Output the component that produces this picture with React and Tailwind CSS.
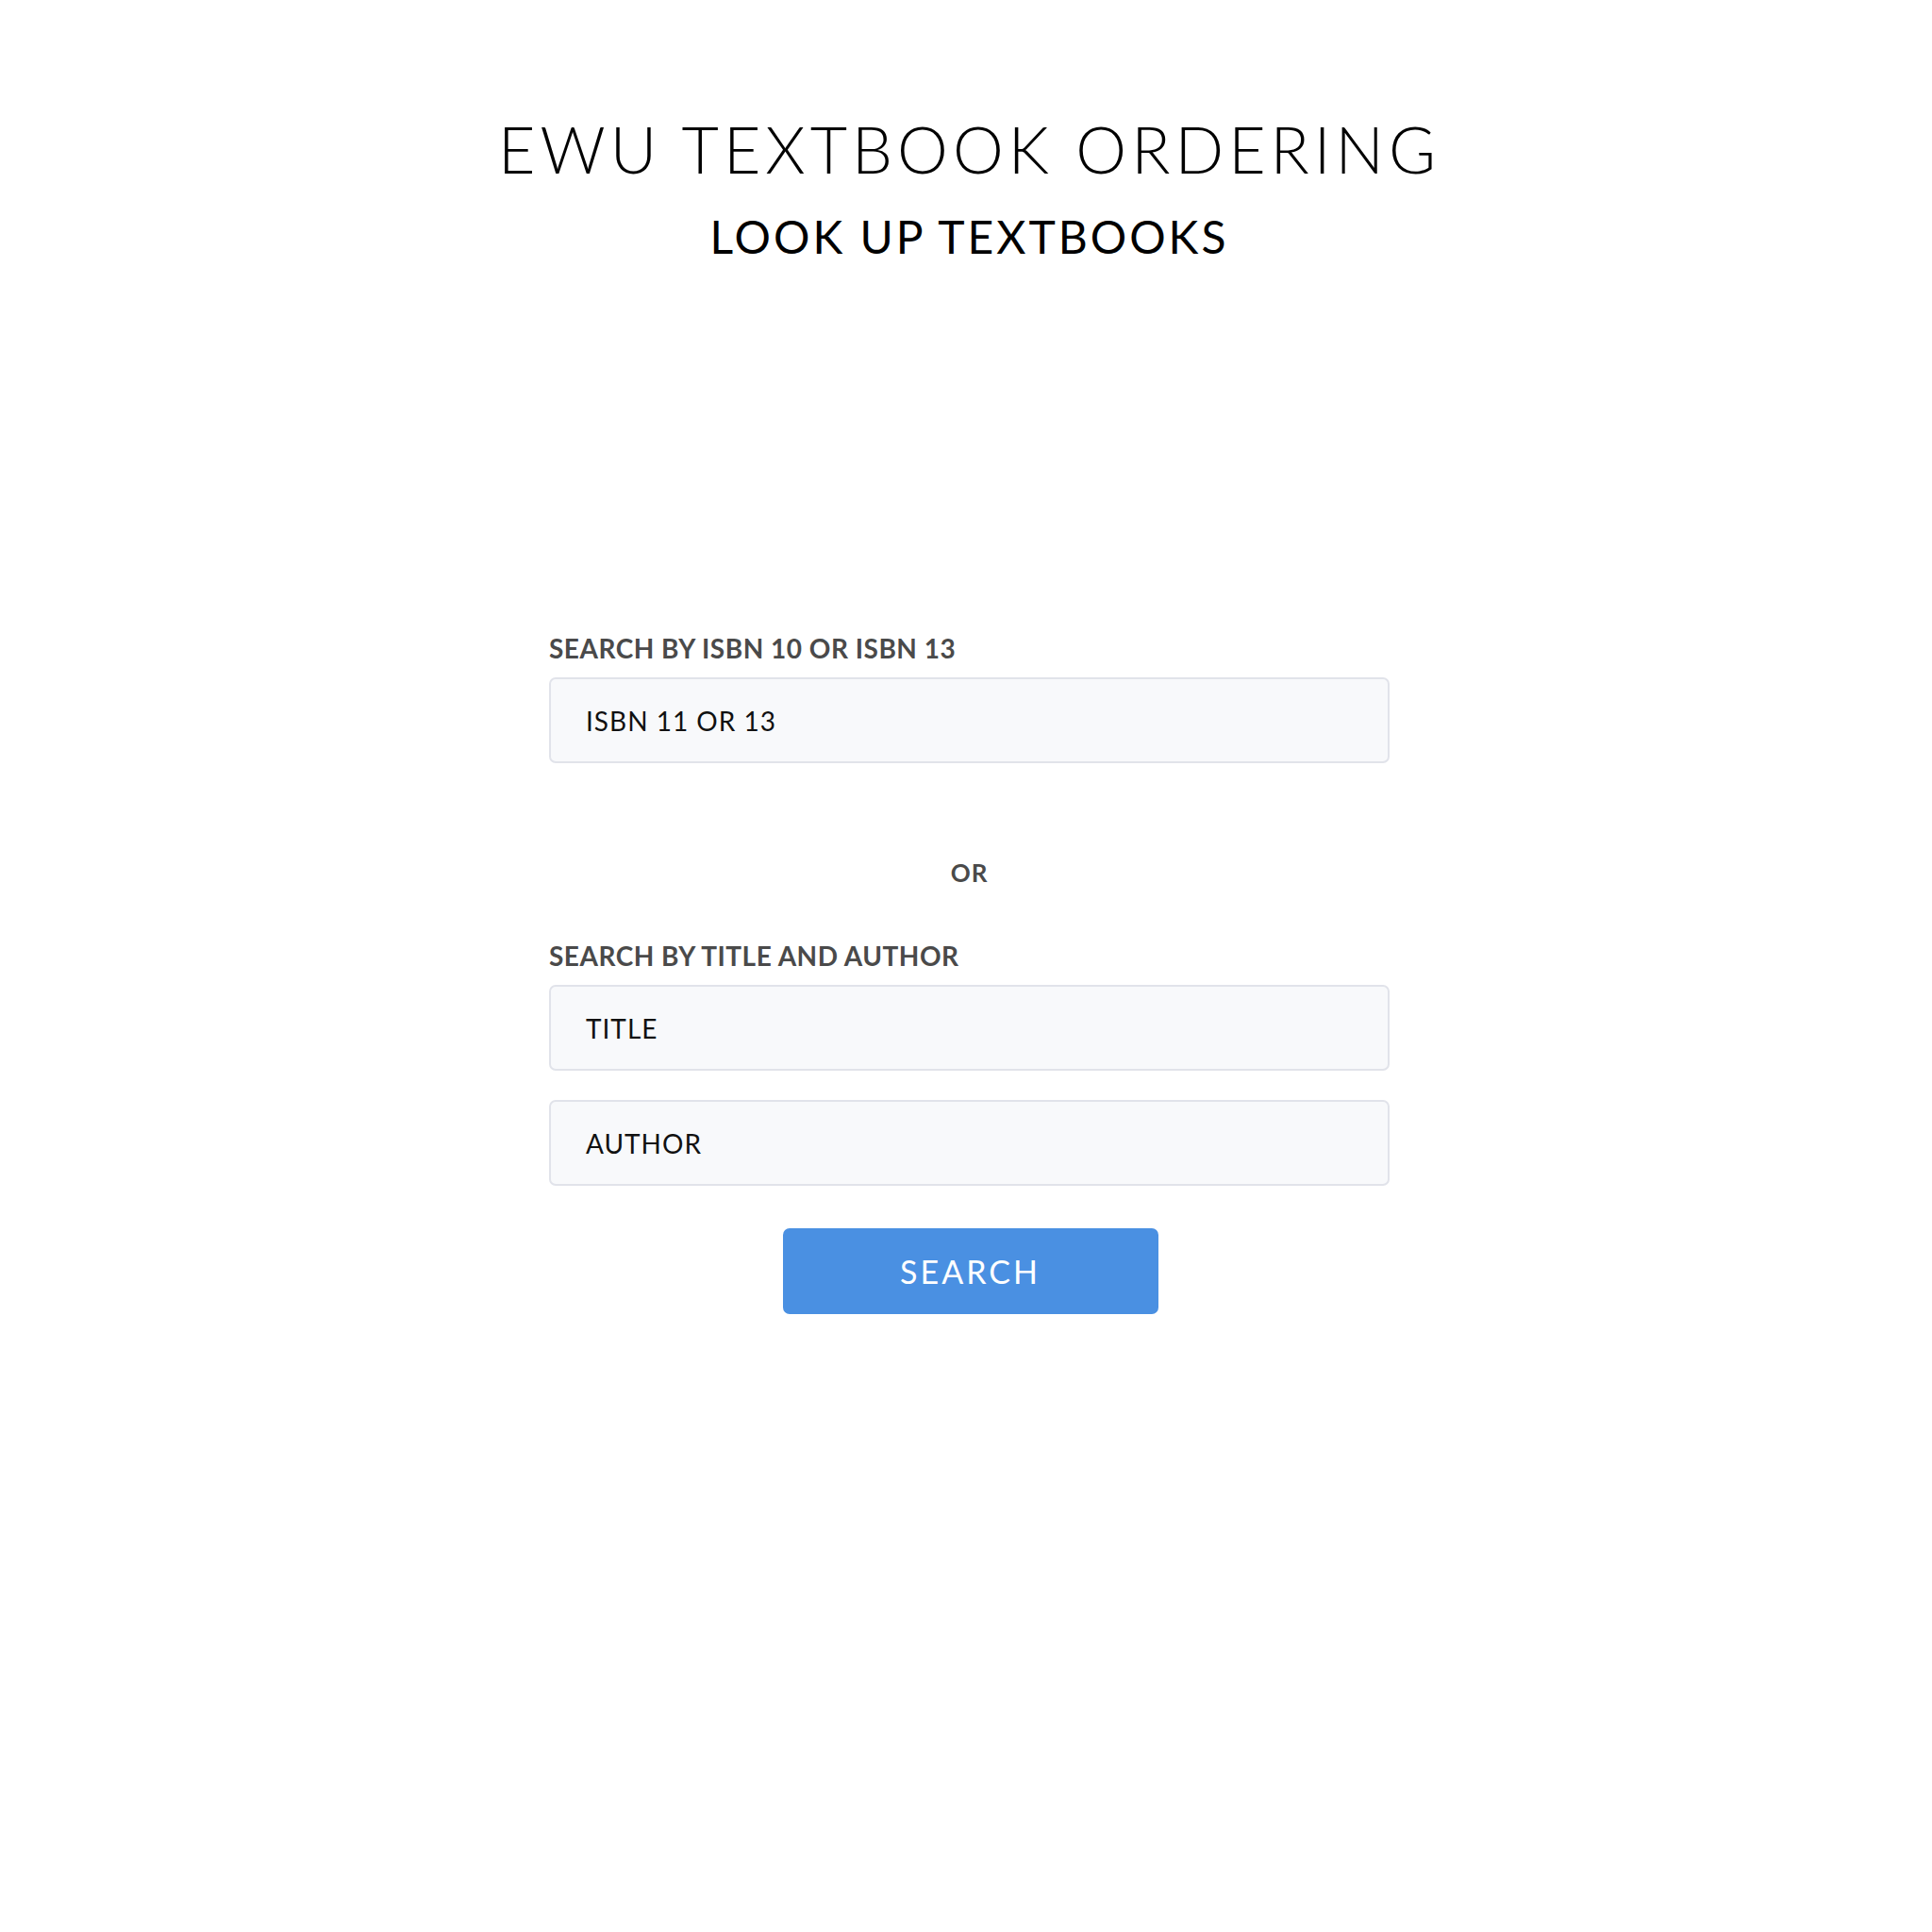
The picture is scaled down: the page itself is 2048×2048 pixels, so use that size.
export default function App() {
  const font = { fontFamily: "Lato, 'Open Sans', sans-serif" };
  return (
    <div className="min-h-[2048px] w-full bg-white text-black" style={font}>
      <div className="flex w-full flex-col items-center pl-[7px]">
        <h1 className="mt-[124px] whitespace-nowrap text-center text-[68px] font-light leading-[68px] tracking-[5px] text-black">
          EWU TEXTBOOK ORDERING
        </h1>
        <h2 className="mt-[35px] whitespace-nowrap text-center text-[48px] font-normal leading-[48px] tracking-[3px] text-black">
          LOOK UP TEXTBOOKS
        </h2>

        <div className="flex w-[891px] flex-col items-stretch">
          <label className="mt-[399px] block whitespace-nowrap text-[28px] font-bold leading-[26px] tracking-[0.5px] text-[#4a4a4a]">
            SEARCH BY ISBN 10 OR ISBN 13
          </label>
          <div className="mt-[18px] flex h-[91px] items-center rounded-[7px] border-2 border-[#e1e3ea] bg-[#f8f9fb] pl-[37px] text-[28px] font-normal tracking-[1px] text-[#111]">
            ISBN 11 OR 13
          </div>

          <div className="mt-[103px] text-center text-[26px] font-bold leading-[26px] tracking-[1px] text-[#4a4a4a]">
            OR
          </div>

          <label className="mt-[62px] block whitespace-nowrap text-[28px] font-bold leading-[26px] tracking-[0.5px] text-[#4a4a4a]">
            SEARCH BY TITLE AND AUTHOR
          </label>
          <div className="mt-[18px] flex h-[91px] items-center rounded-[7px] border-2 border-[#e1e3ea] bg-[#f8f9fb] pl-[37px] text-[28px] font-normal tracking-[1px] text-[#111]">
            TITLE
          </div>
          <div className="mt-[31px] flex h-[91px] items-center rounded-[7px] border-2 border-[#e1e3ea] bg-[#f8f9fb] pl-[37px] text-[28px] font-normal tracking-[1px] text-[#111]">
            AUTHOR
          </div>

          <div className="mt-[45px] flex justify-center pl-[2px]">
            <button className="flex h-[91px] w-[398px] items-center justify-center rounded-[7px] bg-[#4a90e2] text-[34px] font-normal tracking-[3px] text-white">
              SEARCH
            </button>
          </div>
        </div>
      </div>
    </div>
  );
}
